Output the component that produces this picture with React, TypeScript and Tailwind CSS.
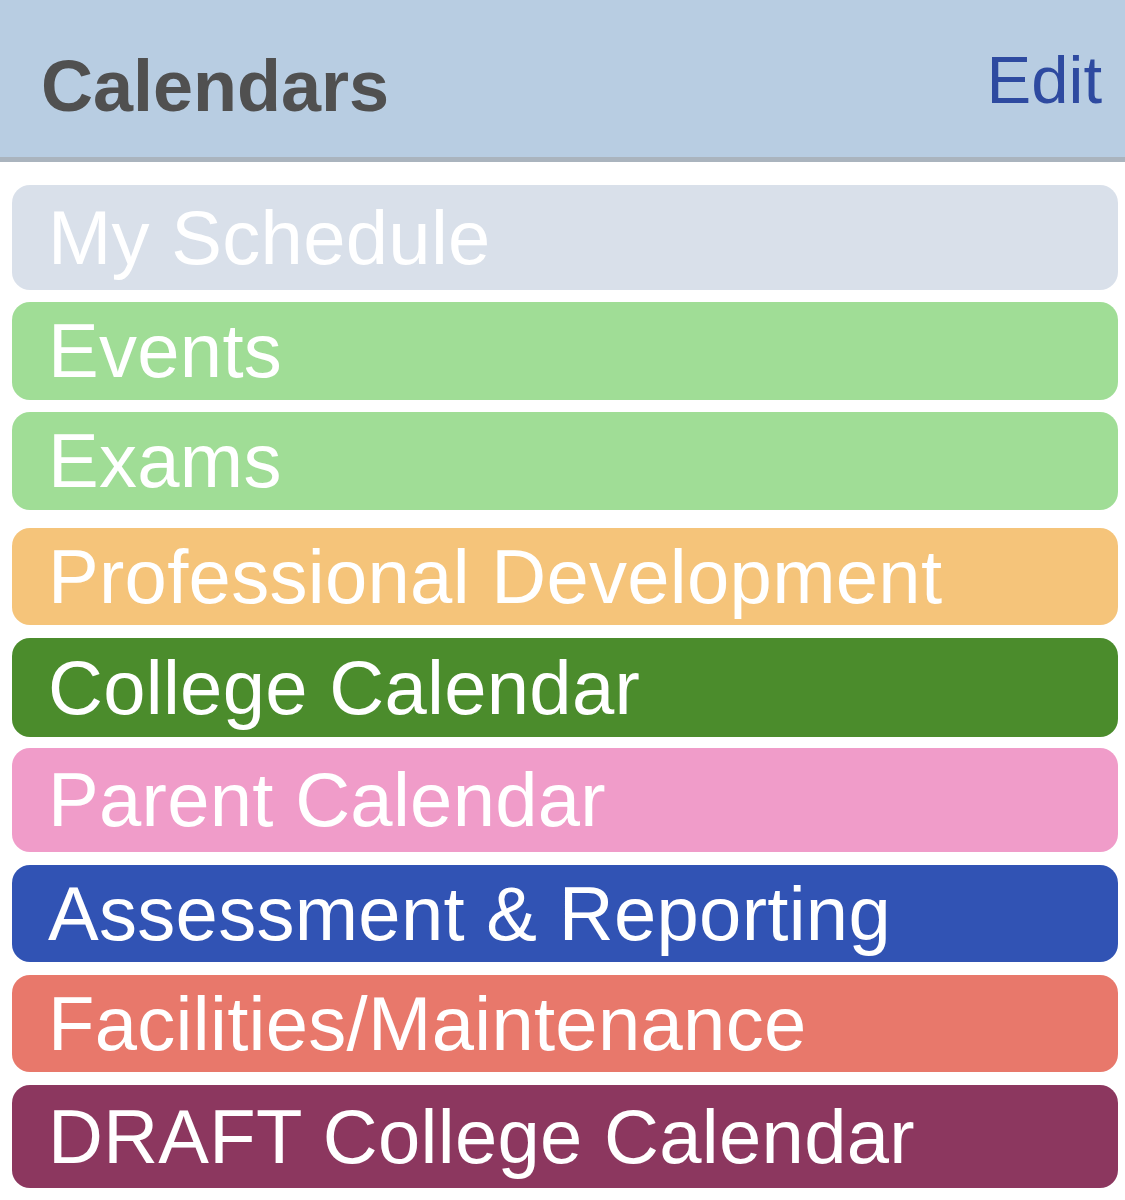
const calendars = [
  { name: 'My Schedule', bg: 'bg-[#d9e0ea]', box: 'h-[105px]' },
  { name: 'Events', bg: 'bg-[#a0dd96]', box: 'h-[98px] mt-[12px]' },
  { name: 'Exams', bg: 'bg-[#a0dd96]', box: 'h-[98px] mt-[12px]' },
  { name: 'Professional Development', bg: 'bg-[#f5c47a]', box: 'h-[97px] mt-[18px]' },
  { name: 'College Calendar', bg: 'bg-[#4b8c2c]', box: 'h-[99px] mt-[13px]' },
  { name: 'Parent Calendar', bg: 'bg-[#f09cc9]', box: 'h-[104px] mt-[11px]' },
  { name: 'Assessment & Reporting', bg: 'bg-[#3153b4]', box: 'h-[97px] mt-[13px]' },
  { name: 'Facilities/Maintenance', bg: 'bg-[#e8786b]', box: 'h-[97px] mt-[13px]' },
  { name: 'DRAFT College Calendar', bg: 'bg-[#8c375f]', box: 'h-[103px] mt-[13px]' },
];

export default function App() {
  return (
    <div className="w-[1125px] h-[1200px] bg-white font-['Liberation_Sans',Arial,sans-serif] overflow-hidden">
      {/* Header */}
      <div className="h-[162px] bg-[#b8cde2] border-b-[5px] border-[#aab4be] flex items-center justify-between pl-[41px] pr-[23px]">
        <span className="text-[72px] font-bold text-[#505050] leading-none mt-[14px]">Calendars</span>
        <span className="text-[67px] text-[#2e4aa0] leading-none mt-[2px] cursor-pointer">Edit</span>
      </div>

      {/* Calendar list */}
      <div className="flex flex-col pt-[23px] pl-[12px] pr-[7px]">
        {calendars.map((c) => (
          <div
            key={c.name}
            className={`${c.bg} ${c.box} rounded-[18px] flex items-center pl-[36px] text-white text-[76px] leading-none tracking-[0.3px]`}
          >
            {c.name}
          </div>
        ))}
      </div>
    </div>
  );
}
